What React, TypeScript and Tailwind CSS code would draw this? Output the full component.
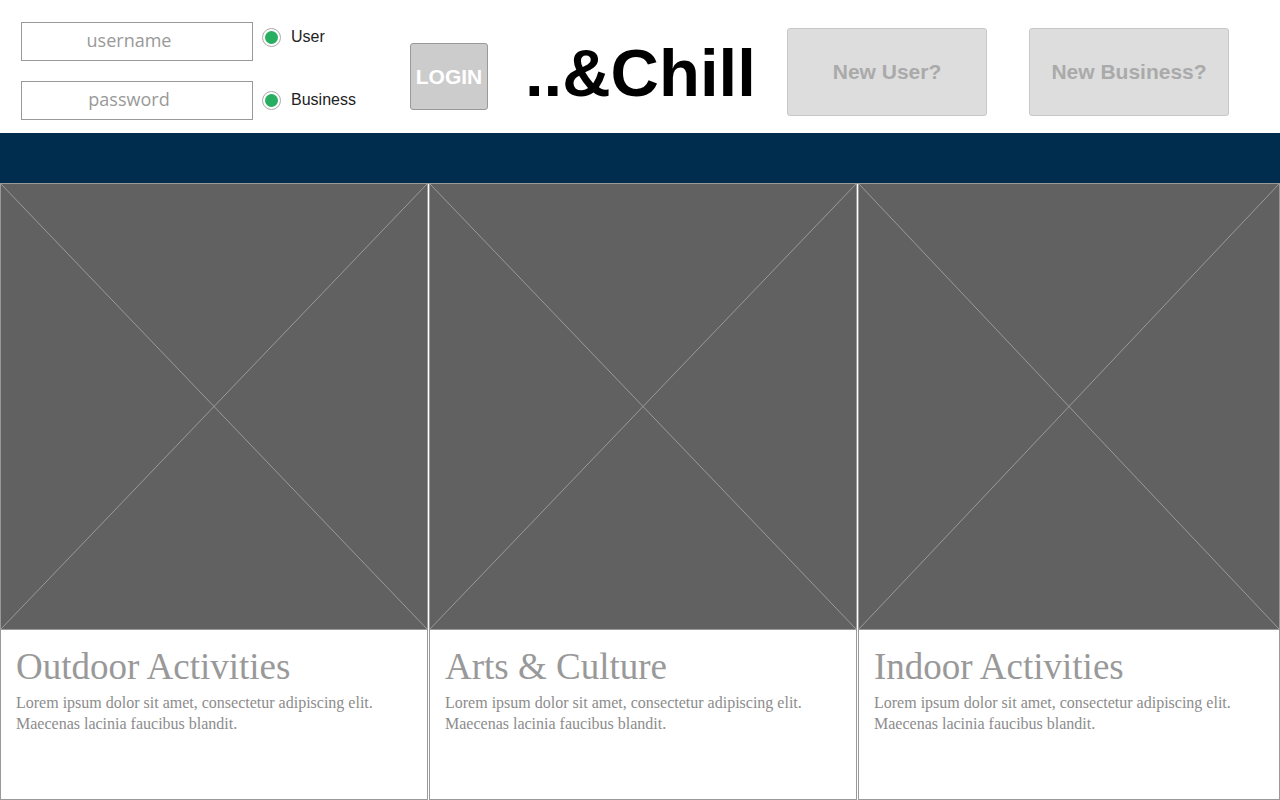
import React from 'react';

const cards = [
    { title: "Outdoor Activities" },
    { title: "Arts & Culture" },
    { title: "Indoor Activities" },
];

const Placeholder = () => (
    <div className="relative h-[446px] bg-[#616161] border-b border-[#999]">
        <svg className="absolute inset-0 w-full h-full" preserveAspectRatio="none" viewBox="0 0 100 100">
            <line x1="0" y1="0" x2="100" y2="100" stroke="#9a9a9a" strokeWidth="1" vectorEffect="non-scaling-stroke" />
            <line x1="100" y1="0" x2="0" y2="100" stroke="#9a9a9a" strokeWidth="1" vectorEffect="non-scaling-stroke" />
        </svg>
    </div>
);

const Radio = ({ label }: { label: string }) => (
    <label className="flex items-center gap-[10px] h-[24px]">
        <span className="w-[19px] h-[19px] rounded-full border border-[#aaa] bg-white flex items-center justify-center">
            <span className="w-[13px] h-[13px] rounded-full bg-[#27ae60]" />
        </span>
        <span className="text-[16px] text-[#222] font-['Liberation_Sans',Arial,sans-serif]">{label}</span>
    </label>
);

const App = () => {
    return (
        <div className="w-[1280px] h-[800px] bg-white overflow-hidden">
            <div className="h-[133px] flex items-start">
                <div className="flex flex-col gap-[20px] pt-[22px] pl-[21px]">
                    <input
                        type="text"
                        placeholder="username"
                        className="w-[232px] h-[39px] border border-[#999] text-center text-[18px] pr-[16px] pb-[3px] placeholder-[#999] font-['Open_Sans',sans-serif] outline-none"
                    />
                    <input
                        type="password"
                        placeholder="password"
                        className="w-[232px] h-[39px] border border-[#999] text-center text-[18px] pr-[16px] pb-[3px] placeholder-[#999] font-['Open_Sans',sans-serif] outline-none"
                    />
                </div>
                <div className="flex flex-col gap-[39px] pt-[25px] pl-[9px] w-[157px]">
                    <Radio label="User" />
                    <Radio label="Business" />
                </div>
                <div className="pt-[43px]">
                    <button className="w-[78px] h-[67px] bg-[#cccccc] border border-[#999] rounded-[3px] text-white font-bold text-[21px] font-['Liberation_Sans',Arial,sans-serif]">
                        LOGIN
                    </button>
                </div>
                <div className="pl-[37px] pt-[33px] w-[299px]">
                    <h1 className="text-[67px] leading-[80px] font-bold text-black font-['Liberation_Sans',Arial,sans-serif]">..&amp;Chill</h1>
                </div>
                <div className="flex gap-[42px] pt-[28px]">
                    <button className="w-[200px] h-[88px] bg-[#dddddd] border border-[#c8c8c8] rounded-[3px] text-[#aaa] font-bold text-[21px] font-['Liberation_Sans',Arial,sans-serif]">
                        New User?
                    </button>
                    <button className="w-[200px] h-[88px] bg-[#dddddd] border border-[#c8c8c8] rounded-[3px] text-[#aaa] font-bold text-[21px] font-['Liberation_Sans',Arial,sans-serif]">
                        New Business?
                    </button>
                </div>
            </div>
            <div className="h-[51px] bg-[#002d4e] border-b border-[#999]" />
            <div className="grid grid-cols-[428px_428px_1fr] gap-[1px]">
                {cards.map((c) => (
                    <div key={c.title} className="border-x border-b border-[#999] h-[616px] flex flex-col">
                        <Placeholder />
                        <div className="px-[15px] pt-[16px] font-['Liberation_Serif',serif] text-[#999]">
                            <h2 className="text-[37px] leading-[42px] mb-[4px]">{c.title}</h2>
                            <p className="text-[16px] leading-[21px] text-[#8c8c8c]">
                                Lorem ipsum dolor sit amet, consectetur adipiscing elit.<br />
                                Maecenas lacinia faucibus blandit.
                            </p>
                        </div>
                    </div>
                ))}
            </div>
        </div>
    );
};

export default App;
